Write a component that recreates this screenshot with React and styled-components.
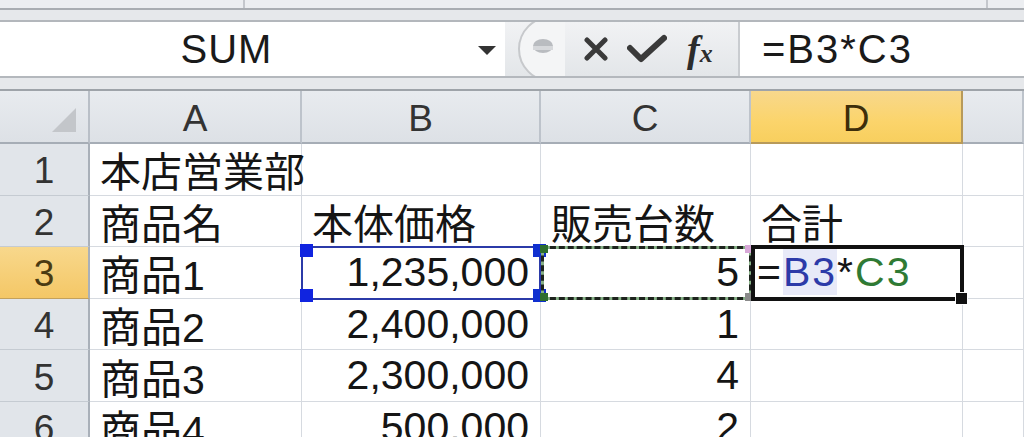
import React from 'react';
import styled, { createGlobalStyle } from 'styled-components';

const GlobalStyle = createGlobalStyle`
  html, body { margin: 0; padding: 0; background: #fff; overflow: hidden; }
  body { font-family: "Liberation Sans", "Noto Sans CJK JP", sans-serif; }
`;

const COLS = ['A', 'B', 'C', 'D', 'E'];

const rows = [
  { n: 1, cells: ['本店営業部', '', '', '', ''] },
  { n: 2, cells: ['商品名', '本体価格', '販売台数', '合計', ''] },
  { n: 3, cells: ['商品1', '1,235,000', '5', 'formula', ''], active: true },
  { n: 4, cells: ['商品2', '2,400,000', '1', '', ''] },
  { n: 5, cells: ['商品3', '2,300,000', '4', '', ''] },
  { n: 6, cells: ['商品4', '500,000', '2', '', ''] },
];

// number columns are right aligned
const alignFor = (col, row) => (row > 2 && (col === 1 || col === 2) ? 'right' : 'left');

const Page = styled.div`
  width: 1024px;
  height: 437px;
  overflow: hidden;
  background: #fff;
`;

const TopStrip = styled.div`
  display: grid;
  grid-template-columns: 245px 1fr 36px;
  height: 8px;
  background: #eceef1;
  border-bottom: 2px solid #a9adb2;
`;

const TabSlot = styled.div`
  border-right: ${p => (p.$last ? 'none' : '2px solid #c4c7cc')};
`;

const Band = styled.div`
  height: ${p => p.$h}px;
  background: #e6e8eb;
  border-bottom: 2px solid ${p => p.$line};
`;

const FormulaBar = styled.div`
  display: grid;
  grid-template-columns: 505px 235px 1fr;
  height: 54px;
  border-bottom: 2px solid #b4b8bd;
`;

const NameBox = styled.div`
  position: relative;
  display: flex;
  align-items: center;
  justify-content: center;
  padding-right: 52px;
  background: #fff;
  font-size: 40px;
  color: #1a1a1a;
  letter-spacing: 1px;
`;

const DropArrow = styled.span`
  position: absolute;
  right: 9px;
  top: 24px;
  width: 0;
  height: 0;
  border-left: 9px solid transparent;
  border-right: 9px solid transparent;
  border-top: 9px solid #333;
`;

const Tools = styled.div`
  display: flex;
  align-items: center;
  gap: 18px;
  padding-left: 10px;
  background: linear-gradient(#f1f2f4, #e3e6e9);
  border-right: 2px solid #c9ccd0;
  overflow: hidden;
`;

const Fx = styled.span`
  font-family: "Liberation Serif", serif;
  font-style: italic;
  font-weight: bold;
  font-size: 38px;
  color: #2c2c2c;
  margin-left: 2px;
  span { font-size: 26px; }
`;

const FormulaInput = styled.div`
  display: flex;
  align-items: center;
  padding-left: 22px;
  background: #fff;
  font-size: 40px;
  letter-spacing: 2px;
  color: #1a1a1a;
`;

const Sheet = styled.div`
  display: grid;
  grid-template-columns: 90px 212px 239px 210px 212px 1fr;
  grid-template-rows: 53px repeat(6, 51.6px);
  border-top: 2px solid #9ea3a9;
`;

const Corner = styled.div`
  position: relative;
  background: linear-gradient(#e8ebef, #dde1e6);
  border-right: 2px solid #b9bfc7;
  border-bottom: 2px solid #a6adb6;
  &::after {
    content: '';
    position: absolute;
    right: 12px;
    bottom: 10px;
    border-left: 24px solid transparent;
    border-bottom: 24px solid #c3c6ca;
  }
`;

const ColHead = styled.div`
  display: flex;
  align-items: center;
  justify-content: center;
  padding-top: 4px;
  font-size: 37px;
  color: ${p => (p.$on ? '#3d2e0a' : '#333')};
  background: ${p => (p.$on ? 'linear-gradient(#f8d88c, #fbd46b 60%, #f8cf5e)' : 'linear-gradient(#e8ebef, #dde1e6)')};
  border-right: 2px solid ${p => (p.$on ? '#b89a5a' : '#bdc3cb')};
  border-bottom: 2px solid ${p => (p.$on ? '#b89a5a' : '#a6adb6')};
`;

const RowHead = styled.div`
  display: flex;
  align-items: center;
  justify-content: center;
  padding-top: 4px;
  font-size: 37px;
  color: ${p => (p.$on ? '#4a3a12' : '#333')};
  background: ${p => (p.$on ? 'linear-gradient(#f8d88c, #f4c766)' : '#e1e5ea')};
  border-right: 2px solid #a9b0b9;
  border-bottom: 1px solid ${p => (p.$on ? '#c3a15c' : '#c5cbd2')};
`;

const Cell = styled.div`
  position: relative;
  display: flex;
  align-items: center;
  justify-content: ${p => (p.$align === 'right' ? 'flex-end' : 'flex-start')};
  padding: 0 11px 0 10px;
  font-size: 41px;
  color: #151515;
  white-space: nowrap;
  background: #fff;
  border-right: 1px solid #d6dae0;
  border-bottom: 1px solid #d6dae0;
`;

const Spill = styled.span`
  position: relative;
  z-index: 1;
`;

const RangeBox = styled.div`
  position: absolute;
  inset: -1px -1px -2px -1px;
  border: 2px solid #2b3aa8;
  pointer-events: none;
  z-index: 2;
`;

const Handle = styled.span`
  position: absolute;
  width: 13px;
  height: 13px;
  background: ${p => p.$c || '#1024e0'};
  ${p => (p.$t ? 'top: -4px;' : 'bottom: -4px;')}
  ${p => (p.$l ? 'left: -3px;' : 'right: -7px;')}
`;

const Ants = styled.div`
  position: absolute;
  inset: -1px -2px -2px 0;
  border: 3px solid #86b086;
  z-index: 2;
  pointer-events: none;
  &::after {
    content: '';
    position: absolute;
    inset: -3px;
    border: 3px dashed #1d231d;
  }
`;

const AntCorner = styled.span`
  position: absolute;
  width: 8px;
  height: 8px;
  z-index: 3;
  background: ${p => p.$c};
  ${p => (p.$t ? 'top: -4px;' : 'bottom: -4px;')}
  ${p => (p.$l ? 'left: -4px;' : 'right: -4px;')}
`;

const ActiveBox = styled.div`
  position: absolute;
  inset: -2px -2px -3px 0;
  border: 4px solid #111;
  z-index: 3;
  pointer-events: none;
`;

const FillHandle = styled.span`
  position: absolute;
  right: -8px;
  bottom: -8px;
  width: 11px;
  height: 11px;
  background: #111;
  border: 1px solid #fff;
`;

const FormulaCellText = styled.span`
  letter-spacing: 2px;
  margin-left: -4px;
`;

const Ref = styled.span`
  color: ${p => p.$c};
  background: ${p => p.$bg || 'transparent'};
`;

const CircleBtn = () => (
  <svg width="50" height="54" viewBox="0 0 50 54">
    <circle cx="36" cy="27" r="32" fill="#f4f5f6" stroke="#c7c9cc" strokeWidth="2" />
    <ellipse cx="28" cy="24" rx="10" ry="7" fill="#b9bcc0" />
    <rect x="18" y="24" width="20" height="4" fill="#d6d8db" />
  </svg>
);

const CancelIcon = () => (
  <svg width="26" height="24" viewBox="0 0 26 24">
    <path d="M4 3 L22 21 M22 3 L4 21" stroke="#3a3a3a" strokeWidth="5" strokeLinecap="round" />
  </svg>
);

const CheckIcon = () => (
  <svg width="40" height="30" viewBox="0 0 40 30">
    <path d="M3 14 L14 25 L37 4" fill="none" stroke="#3a3a3a" strokeWidth="6" strokeLinejoin="round" strokeLinecap="round" />
  </svg>
);

const FormulaText = () => (
  <FormulaCellText>
    =<Ref $c="#2d3aa8" $bg="#e8eaf8">B3</Ref>*<Ref $c="#2f7a34">C3</Ref>
  </FormulaCellText>
);

const renderCell = (r, ci) => {
  const v = r.cells[ci];
  const align = alignFor(ci, r.n);
  const key = `${r.n}-${ci}`;
  if (r.active && ci === 1) {
    return (
      <Cell key={key} $align={align}>
        {v}
        <RangeBox>
          <Handle $t $l />
          <Handle $t $c="#1030d0" />
          <Handle $l />
          <Handle $c="#1030d0" />
        </RangeBox>
      </Cell>
    );
  }
  if (r.active && ci === 2) {
    return (
      <Cell key={key} $align={align}>
        {v}
        <Ants>
          <AntCorner $t $l $c="#2e6e2e" />
          <AntCorner $l $c="#2e6e2e" />
          <AntCorner $t $c="#d8a8d8" />
          <AntCorner $c="#8a8a8a" />
        </Ants>
      </Cell>
    );
  }
  if (r.active && ci === 3) {
    return (
      <Cell key={key} $align="left">
        <FormulaText />
        <ActiveBox>
          <FillHandle />
        </ActiveBox>
      </Cell>
    );
  }
  return (
    <Cell key={key} $align={align}>
      {v && <Spill>{v}</Spill>}
    </Cell>
  );
};

const App = () => {
  return (
    <>
      <GlobalStyle />
      <Page>
        <TopStrip>
          <TabSlot />
          <TabSlot />
          <TabSlot $last />
        </TopStrip>
        <Band $h={10} $line="#b3b7bc" />
        <FormulaBar>
          <NameBox>
            SUM
            <DropArrow />
          </NameBox>
          <Tools>
            <CircleBtn />
            <CancelIcon />
            <CheckIcon />
            <Fx>f<span>x</span></Fx>
          </Tools>
          <FormulaInput>=B3*C3</FormulaInput>
        </FormulaBar>
        <Band $h={9} $line="#e6e8eb" />
        <Sheet>
          <Corner />
          {COLS.map(c => (
            <ColHead key={c} $on={c === 'D'}>{c === 'E' ? '' : c}</ColHead>
          ))}
          {rows.map(r => (
            <React.Fragment key={r.n}>
              <RowHead $on={r.active}>{r.n}</RowHead>
              {r.cells.map((_, ci) => renderCell(r, ci))}
            </React.Fragment>
          ))}
        </Sheet>
      </Page>
    </>
  );
};

export default App;
